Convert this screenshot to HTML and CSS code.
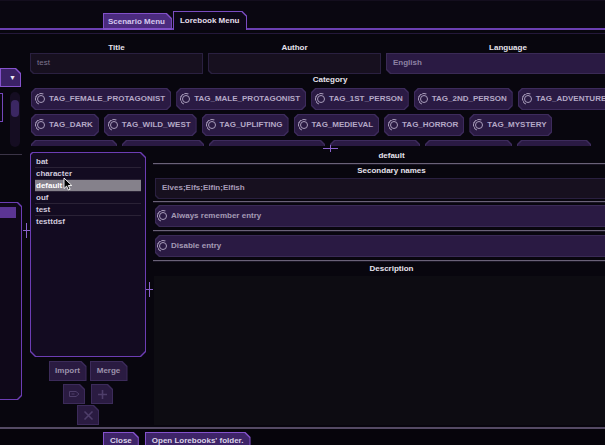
FILE: index.html
```html
<!DOCTYPE html>
<html>
  <head>
    <meta charset="utf-8">
    <title>Lorebook Menu</title>
    <link rel="stylesheet" href="styles.css">
  </head>
  <body>
    <div class="screen">
      <div class="topbar">
        <div class="tab box">Scenario Menu</div>
        <div class="tab box active">Lorebook Menu</div>
      </div>

      <div class="page">
        <!-- collapsed scenario side panel -->
        <div class="side">
          <div class="drop box">&#9660;</div>
          <div class="side-row">
            <div class="sliver"></div>
            <div class="scroll"><div class="thumb"></div></div>
          </div>
          <div class="side-line"></div>
          <div class="side-panel box"><div class="side-sel"></div></div>
        </div>
        <div class="vsplit"><i></i></div>

        <div class="main">
          <div class="meta">
            <div class="field f-title">
              <div class="label">Title</div>
              <div class="input box">test</div>
            </div>
            <div class="field f-author">
              <div class="label">Author</div>
              <div class="input box"></div>
            </div>
            <div class="field f-lang">
              <div class="label">Language</div>
              <div class="input select box">English</div>
            </div>
          </div>

          <div class="label cat">Category</div>
          <div class="tags">
            <div class="tag-row">
              <div class="tag box"><span class="ico"></span>TAG_FEMALE_PROTAGONIST</div>
              <div class="tag box"><span class="ico"></span>TAG_MALE_PROTAGONIST</div>
              <div class="tag box"><span class="ico"></span>TAG_1ST_PERSON</div>
              <div class="tag box"><span class="ico"></span>TAG_2ND_PERSON</div>
              <div class="tag box"><span class="ico"></span>TAG_ADVENTURE</div>
            </div>
            <div class="tag-row">
              <div class="tag box"><span class="ico"></span>TAG_DARK</div>
              <div class="tag box"><span class="ico"></span>TAG_WILD_WEST</div>
              <div class="tag box"><span class="ico"></span>TAG_UPLIFTING</div>
              <div class="tag box"><span class="ico"></span>TAG_MEDIEVAL</div>
              <div class="tag box"><span class="ico"></span>TAG_HORROR</div>
              <div class="tag box"><span class="ico"></span>TAG_MYSTERY</div>
            </div>
            <!-- third row is scrolled out of view, only the tops show -->
            <div class="tag-row">
              <div class="tag box w86"></div>
              <div class="tag box w82"></div>
              <div class="tag box w116"></div>
              <div class="tag box w90"></div>
              <div class="tag box w87"></div>
              <div class="tag box w74"></div>
            </div>
          </div>
          <div class="hsplit"><i></i></div>

          <div class="work">
            <div class="books">
              <div class="list box">
                <div class="item">bat</div>
                <div class="item">character</div>
                <div class="item selected">default</div>
                <div class="item">ouf</div>
                <div class="item">test</div>
                <div class="item">testtdsf</div>
              </div>
              <div class="btn-row">
                <div class="btn box">Import</div>
                <div class="btn box">Merge</div>
              </div>
              <div class="btn-row icons">
                <div class="btn sq box">
                  <svg width="11" height="8" viewBox="0 0 11 8"><path d="M0.5 1.5h6.5l3 2.5-3 2.5h-6.5z" fill="none" stroke="#4e3e6a"/><path d="M2.5 4h3" stroke="#4e3e6a"/></svg>
                </div>
                <div class="btn sq box">
                  <svg width="11" height="11" viewBox="0 0 11 11"><path d="M5.5 1v9M1 5.5h9" stroke="#4e3e6a" stroke-width="1.6"/></svg>
                </div>
              </div>
              <div class="btn-row icons last">
                <div class="btn sq box">
                  <svg width="11" height="11" viewBox="0 0 11 11"><path d="M1.5 1.5l8 8M9.5 1.5l-8 8" stroke="#4e3e6a" stroke-width="1.6"/></svg>
                </div>
              </div>
            </div>
            <div class="vsplit"><i></i></div>

            <div class="editor">
              <div class="label">default</div>
              <div class="sep"></div>
              <div class="label sub">Secondary names</div>
              <div class="input names box">Elves;Elfs;Elfin;Elfish</div>
              <div class="sep"></div>
              <div class="toggle box first"><span class="ico"></span>Always remember entry</div>
              <div class="sep s3"></div>
              <div class="toggle box"><span class="ico"></span>Disable entry</div>
              <div class="sep s3"></div>
              <div class="label desc">Description</div>
              <div class="textarea"></div>
            </div>
          </div>
        </div>
      </div>

      <div class="footer">
        <div class="fbtn box">Close</div>
        <div class="fbtn box">Open Lorebooks' folder.</div>
      </div>
    </div>

    <svg class="cursor" width="10" height="14" viewBox="0 0 10 14"><path d="M1 1 L1 11.5 L3.6 9.1 L5.4 13 L7.1 12.2 L5.3 8.5 L8.8 8.5 Z" fill="#000" stroke="#fff" stroke-width="0.9"/></svg>
  </body>
</html>
```

FILE: styles.css
```css
* {
    box-sizing: border-box;
}

body {
    margin: 0;
    width: 605px;
    height: 445px;
    overflow: hidden;
    position: relative;
    background: #08060e;
    font-family: "Liberation Sans", Arial, sans-serif;
    font-size: 8px;
    font-weight: bold;
    line-height: 10px;
    color: #e2dee8;
}

.screen {
    width: 630px;
}

/* chamfered frame: background is the border, ::before is the fill */
.box {
    --tl: 0px;
    --tr: 0px;
    --br: 0px;
    --bl: 0px;
    --bd: #3d2b5c;
    --bg: #2a1a43;
    position: relative;
    z-index: 0;
    background: var(--bd);
    clip-path: polygon(var(--tl) 0, calc(100% - var(--tr)) 0, 100% var(--tr), 100% calc(100% - var(--br)), calc(100% - var(--br)) 100%, var(--bl) 100%, 0 calc(100% - var(--bl)), 0 var(--tl));
}

.box::before {
    content: "";
    position: absolute;
    inset: var(--in, 1px);
    z-index: -1;
    background: var(--bg);
    clip-path: polygon(var(--tl) 0, calc(100% - var(--tr)) 0, 100% var(--tr), 100% calc(100% - var(--br)), calc(100% - var(--br)) 100%, var(--bl) 100%, 0 calc(100% - var(--bl)), 0 var(--tl));
}

/* top tabs */
.topbar {
    height: 30px;
    display: flex;
    align-items: flex-end;
    padding-left: 103px;
    background: #0a0711;
    border-top: 1px solid #140e1e;
    border-bottom: 2px solid #6b3fb2;
}

.tab {
    --tr: 5px;
    margin-bottom: -2px;
    white-space: nowrap;
}

.tab:not(.active) {
    --bd: #8150c8;
    --bg: #4b2b7e;
    --in: 1px 1px 2px 1px;
    height: 17px;
    padding: 4px 7px 0 5px;
    color: #d6c8ee;
}

.tab.active {
    --bd: #7a4cc0;
    --bg: #0c0716;
    --in: 1px 1px 0 1px;
    height: 19px;
    margin-left: 1px;
    padding: 5px 8px 0 7px;
    color: #e4deec;
}

.page {
    display: flex;
    height: 394px;
    margin-top: 3px;
    border-top: 1px solid #24183a;
}

/* left collapsed panel */
.side {
    width: 22px;
    display: flex;
    flex-direction: column;
}

.drop {
    --tr: 5px;
    --bd: #8552cc;
    --bg: #3b2266;
    width: 21px;
    height: 19px;
    margin-top: 34px;
    padding: 5px 0 0 9px;
    font-size: 7px;
    color: #f0ecf6;
}

.side-row {
    display: flex;
    margin-top: 5px;
}

.sliver {
    width: 3px;
    height: 29px;
    margin-top: 1px;
    border: 1px solid #7447bc;
    border-left: none;
}

.scroll {
    width: 10px;
    height: 55px;
    margin-left: 7px;
    padding: 8px 1px 0;
    border-radius: 5px;
    background: #150d22;
}

.thumb {
    height: 17px;
    border-radius: 4px;
    background: #3b2763;
}

.side-line {
    height: 1px;
    margin-top: 7px;
    background: #3b3447;
}

.side-panel {
    --tr: 4px;
    --br: 4px;
    --bd: #6c3db4;
    --bg: #0f0819;
    --in: 1px 1px 1px 0;
    width: 22px;
    height: 198px;
    margin-top: 47px;
    padding-top: 5px;
}

.side-sel {
    width: 16px;
    height: 11px;
    background: #5b3594;
}

/* splitter grabbers */
.vsplit {
    width: 7px;
    flex: none;
    display: flex;
    align-items: center;
    justify-content: center;
}

.page > .vsplit {
    width: 8px;
}

.vsplit i {
    position: relative;
    width: 1px;
    height: 15px;
    background: #8a62cc;
}

.vsplit i::after {
    content: "";
    position: absolute;
    left: -3px;
    top: 7px;
    width: 7px;
    height: 1px;
    background: #8a62cc;
}

.hsplit {
    height: 5px;
    display: flex;
    justify-content: center;
    align-items: center;
}

.hsplit i {
    position: relative;
    width: 15px;
    height: 1px;
    background: #8a62cc;
}

.hsplit i::after {
    content: "";
    position: absolute;
    left: 7px;
    top: -3px;
    width: 1px;
    height: 7px;
    background: #8a62cc;
}

/* main area */
.main {
    width: 600px;
    display: flex;
    flex-direction: column;
}

.label {
    height: 10px;
    text-align: center;
    color: #e6e2ec;
    white-space: nowrap;
}

.meta {
    display: flex;
    gap: 5px;
    margin-top: 9px;
}

.f-title,
.f-author {
    width: 173px;
}

.f-lang {
    width: 244px;
}

.input {
    --bl: 3px;
    --bd: #2a2040;
    --bg: #17101f;
    height: 21px;
    padding: 5px 7px 0;
    white-space: nowrap;
    color: #7e758e;
    font-weight: normal;
}

.input.select {
    --bl: 4px;
    --bd: #3a2a56;
    --bg: #2a1a43;
    color: #8e82a4;
    font-weight: bold;
}

.cat {
    margin-top: 1px;
}

.tags {
    height: 58px;
    margin-top: 3px;
    padding-left: 1px;
    overflow: hidden;
    display: flex;
    flex-direction: column;
    gap: 4px;
}

.tag-row {
    display: flex;
    gap: 5px;
}

.tag {
    --tl: 4px;
    --tr: 4px;
    --br: 4px;
    --bl: 4px;
    flex: none;
    height: 22px;
    display: flex;
    align-items: center;
    padding: 0 6px 0 4px;
    white-space: nowrap;
    color: #b4a8c6;
}

.tag.w86 { width: 86px; }
.tag.w82 { width: 82px; }
.tag.w116 { width: 116px; }
.tag.w90 { width: 90px; }
.tag.w87 { width: 87px; }
.tag.w74 { width: 74px; }

/* ring toggle icon */
.ico {
    position: relative;
    flex: none;
    width: 8px;
    height: 8px;
    margin: 0 4px 0 2px;
    border: 1.4px solid #a99dbb;
    border-radius: 50%;
}

.ico::before {
    content: "";
    position: absolute;
    inset: -3px;
    border: 1.2px solid transparent;
    border-left-color: #a99dbb;
    border-top-color: #a99dbb;
    border-radius: 50%;
    transform: rotate(-20deg);
}

/* lorebook list column */
.work {
    display: flex;
    flex: 1;
}

.books {
    width: 116px;
    flex: none;
    display: flex;
    flex-direction: column;
    align-items: center;
}

.list {
    --tl: 2px;
    --tr: 5px;
    --br: 5px;
    --bl: 5px;
    --bd: #6c3db4;
    --bg: #130b21;
    width: 116px;
    height: 205px;
    margin-top: 1px;
    padding: 4px 5px 0 5px;
}

.item {
    height: 12px;
    padding-left: 1px;
    line-height: 11px;
    border-bottom: 1px solid #2a2236;
    color: #d2cadd;
}

.item:last-child {
    border-bottom: none;
}

.item.selected {
    background: #85818b;
    color: #ffffff;
}

.btn-row {
    display: flex;
    gap: 3px;
    margin-top: 4px;
}

.btn {
    --tr: 5px;
    --bd: #3c2b5a;
    --bg: #2a1b41;
    width: 38px;
    height: 20px;
    padding-top: 5px;
    text-align: center;
    color: #9c92ab;
}

.btn-row.icons {
    gap: 6px;
    margin-top: 3px;
}

.btn-row.last {
    margin-top: 1px;
}

.btn.sq {
    width: 22px;
    height: 20px;
    padding-top: 0;
    display: flex;
    align-items: center;
    justify-content: center;
}

/* entry editor */
.editor {
    width: 477px;
    flex: none;
    display: flex;
    flex-direction: column;
}

.sep {
    height: 2px;
    margin-top: 2px;
    border-top: 1px solid #6a6278;
    border-bottom: 1px solid #1a1524;
}

.sep.s3 {
    margin-top: 3px;
}

.sub {
    margin-top: 1px;
}

.input.names {
    margin: 2px 0 0 2px;
    color: #a89cb8;
    font-weight: bold;
}

.toggle {
    --tl: 4px;
    --bl: 4px;
    --bd: #3a2a56;
    --bg: #2a1a43;
    height: 22px;
    margin: 2px 0 0 2px;
    display: flex;
    align-items: center;
    padding-left: 2px;
    color: #a59ab5;
}

.toggle + .sep + .toggle {
    margin-top: 3px;
}

.desc {
    margin-top: 2px;
}

.textarea {
    height: 149px;
    margin: 2px 0 0 1px;
    background: #0d0c12;
}

/* bottom buttons */
.footer {
    display: flex;
    gap: 6px;
    height: 18px;
    padding: 3px 0 0 103px;
    border-top: 2px solid #544a64;
    background: #06040b;
}

.fbtn {
    --tr: 5px;
    --bd: #8452cc;
    --bg: #3e2468;
    height: 16px;
    padding: 4px 7px 0;
    white-space: nowrap;
    color: #dcd4ea;
}

.cursor {
    position: absolute;
    left: 63px;
    top: 177px;
}
```
